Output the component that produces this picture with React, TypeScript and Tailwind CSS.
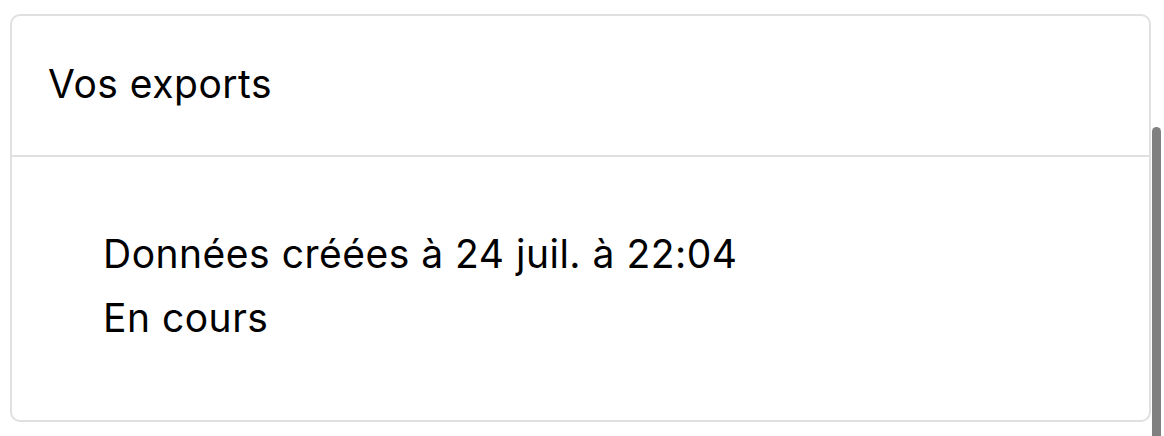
import React from "react";

export default function App() {
  return (
    <div className="relative w-[1164px] h-[436px] bg-white overflow-hidden" style={{ fontFamily: "Inter, 'Noto Sans', sans-serif" }}>
      <div className="pt-[14px] pl-[10px]">
        <div className="w-[1141px] h-[408px] border-2 border-[#e0e0e0] rounded-[10px] flex flex-col">
          <div className="h-[141px] border-b-2 border-[#e0e0e0] pl-[36px] pt-[36px]">
            <div className="text-[39px] tracking-[0.5px] text-black leading-[64px]">Vos exports</div>
          </div>
          <div className="pl-[91px] pt-[65px] flex flex-col text-[39px] tracking-[0.5px] text-black leading-[64px]">
            <span>Données créées à 24 juil. à 22:04</span>
            <span>En cours</span>
          </div>
        </div>
      </div>
      <div className="absolute left-[1152px] top-[127px] w-[9px] h-[320px] rounded-t-full bg-[#808080]" />
    </div>
  );
}
